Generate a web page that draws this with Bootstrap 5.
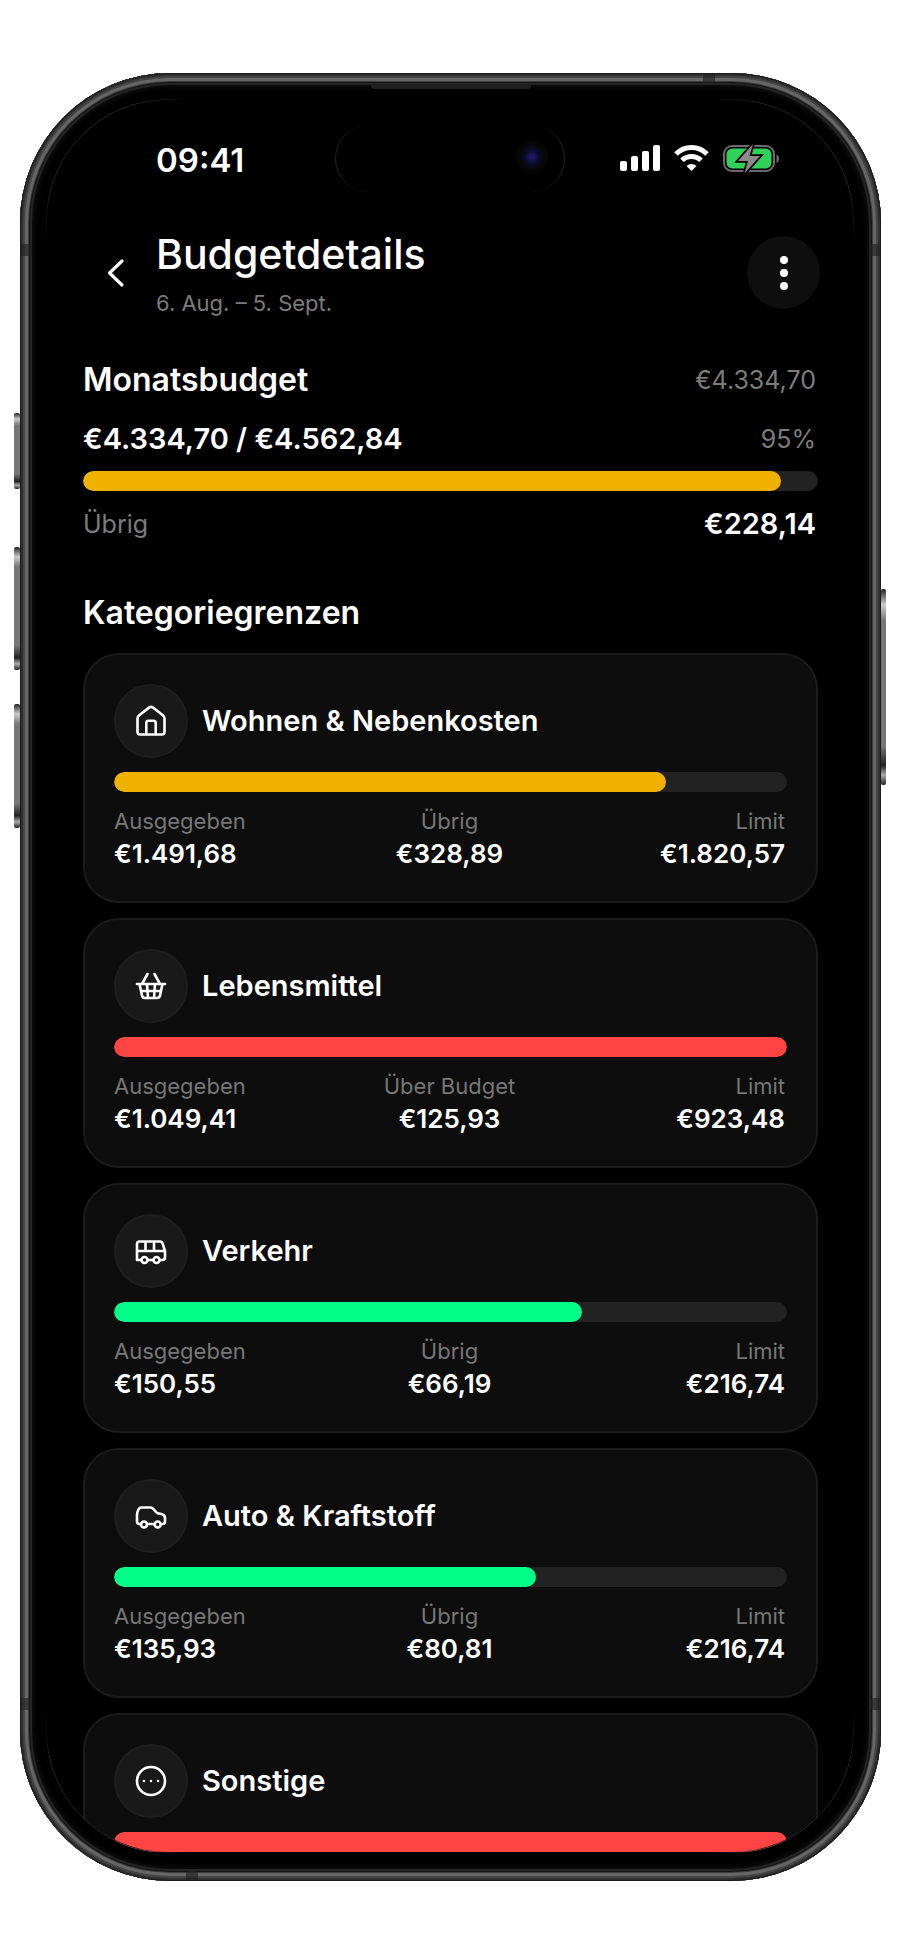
<!DOCTYPE html>
<html lang="de">
<head>
<meta charset="utf-8">
<meta name="viewport" content="width=device-width, initial-scale=1">
<title>Budgetdetails</title>
<link href="https://cdn.jsdelivr.net/npm/bootstrap@5.3.0/dist/css/bootstrap.min.css" rel="stylesheet">
<style>
  :root { --yellow: #f0b100; --red: #ff4444; --green: #00ff88; --muted: #7c7c7c; }
  body { background: #fff; color: #fff; font-family: Inter, "Liberation Sans", sans-serif; padding: 73px 19px 73px 20px; }
  .phone { max-width: 960px; padding: 26px 27px 28px 26px; border-radius: 150px; background: #000;
    box-shadow: inset 0 0 0 1px #1a1a1a, inset 0 0 0 3px #303030, inset 0 0 0 5px #454545, inset 0 0 0 8px #666,
      inset 0 0 0 9px #3c3c3c, inset 0 0 0 10px #151515, inset 0 0 0 12px #242424, inset 0 0 6px 13px #151515; }
  .side-key { position: absolute; width: 6px; border-radius: 2px; background: linear-gradient(#222, #ccc 8%, #777 16%, #777 80%, #222 90%, #aaa 95%, #222); }
  .key-left { left: -6px; }
  .key-right { right: -5px; width: 5px; }
  .key-action { top: 340px; height: 76px; }
  .key-up { top: 474px; height: 123px; }
  .key-down { top: 631px; height: 124px; }
  .key-power { top: 516px; height: 196px; }
  .earpiece { position: absolute; top: 11px; left: 50%; width: 160px; margin-left: -80px; height: 5px; background: #202020; border-radius: 0 0 4px 4px; }
  .antenna { position: absolute; width: 9px; height: 12px; background: rgba(34, 34, 34, .65); }
  .antenna-wide { width: 12px; height: 9px; }
  .antenna-top { top: 1px; right: 166px; }
  .antenna-bottom { bottom: 1px; left: 166px; }
  .antenna-left { left: 1px; }
  .antenna-right { right: 1px; }
  .antenna-high { top: 171px; }
  .antenna-low { bottom: 171px; }
  .screen { border-radius: 122px; background: #000; padding: 0 36px 1px 37px; overflow: hidden; }
  .screen-edge { position: absolute; inset: 26px 27px 28px 26px; border: 1px solid #262626; border-radius: 122px; pointer-events: none;
    -webkit-mask-image: linear-gradient(90deg, #000 90px, transparent 145px, transparent calc(100% - 145px), #000 calc(100% - 90px)), linear-gradient(#000 90px, transparent 145px, transparent calc(100% - 145px), #000 calc(100% - 90px));
    -webkit-mask-composite: source-in; mask-composite: intersect; }
  .status-bar { padding: 41px 36px 0 73px; height: 94px; }
  .status-time { font-size: 33px; line-height: 40px; font-weight: 600; }
  .island { position: absolute; top: 52px; left: 50%; width: 230px; height: 67px; margin-left: -116px; border-radius: 34px; background: #000; border-left: 1px solid #222; border-right: 1px solid #222; }
  .camera { width: 34px; height: 34px; margin: 15px 15px 0 0; background: radial-gradient(circle, #1c1a66 0 2px, #0e0c33 6px, #070707 12px, #040404 17px); }
  .title-bar { height: 128px; margin-right: -2px; }
  .round-btn { width: 73px; height: 73px; margin-top: 43px; }
  .back-btn { padding: 0 0 0 12px; }
  .menu-btn, .menu-btn:hover { background: #0e0e0e; border-radius: 50%; }
  .titles { padding-top: 36px; }
  .page-title { font-size: 41px; line-height: 50px; font-weight: 500; }
  .period { font-size: 22px; line-height: 28px; color: var(--muted); margin-top: 10px; }
  .heading { font-size: 32px; line-height: 40px; font-weight: 600; }
  .amount { font-size: 29px; line-height: 40px; font-weight: 600; }
  .side-amount { font-size: 25px; line-height: 40px; color: var(--muted); }
  .summary { padding: 39px 0 0; }
  .summary-row { padding-right: 2px; }
  .summary-row + .summary-row { margin-top: 19px; }
  .summary .meter { margin: 12px 0 13px; }
  .meter { height: 20px; background: #222; border-radius: 10px; }
  .meter .progress-bar { border-radius: 10px; }
  .bar-yellow { background: var(--yellow); }
  .bar-red { background: var(--red); }
  .bar-green { background: var(--green); }
  .limits-title { margin: 49px 0 20px; }
  .limit-list { gap: 15px; }
  .limit-card { background: #0d0d0d; border: 2px solid #1b1b1b; border-radius: 36px; padding: 29px; color: #fff; height: auto; }
  .limit-card.cut-off { border-bottom: 0; border-radius: 36px 36px 0 0; padding-bottom: 0; }
  .cat-icon { width: 74px; height: 74px; background: #191919; border: 2px solid #1e1e1e; border-radius: 50%; }
  .cat-icon svg { fill: none; stroke: #fff; stroke-width: 2.6; stroke-linecap: round; stroke-linejoin: round; }
  .cat-name { font-size: 29px; line-height: 40px; font-weight: 600; margin-left: 14px; }
  .limit-card .meter { margin-top: 14px; }
  .figures { margin-top: 14px; padding-right: 2px; }
  .fig-label { font-size: 22px; line-height: 30px; font-weight: 400; color: #777; }
  .fig-value { font-size: 26px; line-height: 36px; font-weight: 600; margin: 0; }
</style>
</head>
<body>
<main class="phone position-relative mx-auto">
  <span class="side-key key-left key-action"></span>
  <span class="side-key key-left key-up"></span>
  <span class="side-key key-left key-down"></span>
  <span class="side-key key-right key-power"></span>
  <span class="antenna antenna-wide antenna-top"></span>
  <span class="antenna antenna-wide antenna-bottom"></span>
  <span class="antenna antenna-left antenna-high"></span>
  <span class="antenna antenna-left antenna-low"></span>
  <span class="antenna antenna-right antenna-high"></span>
  <span class="antenna antenna-right antenna-low"></span>
  <span class="earpiece"></span>
  <div class="island d-flex justify-content-end"><span class="camera rounded-circle"></span></div>

  <div class="screen">
    <div class="status-bar d-flex justify-content-between align-items-start">
      <span class="status-time">09:41</span>
      <svg class="mt-1" width="162" height="32" viewBox="0 0 162 32" role="img" aria-label="Empfang, WLAN, Akku lädt">
        <g fill="#fff"><rect x="0" y="17" width="7" height="10" rx="2"/><rect x="11" y="12" width="7" height="15" rx="2"/><rect x="22" y="7" width="7" height="20" rx="2"/><rect x="33" y="1" width="7" height="26" rx="2"/></g>
        <g fill="none" stroke="#fff" stroke-width="5"><path d="M56 10a21.500 21.500 0 0 1 31 0"/><path d="M62 16.300a13.500 13.500 0 0 1 19 0"/></g>
        <path d="M71.500 27l-5-5a7.500 7.500 0 0 1 10 0z" fill="#fff"/>
        <rect x="104" y="2" width="50" height="25" rx="8" fill="none" stroke="#6b6b6b" stroke-width="2"/>
        <rect x="106.500" y="4.500" width="45" height="20" rx="6" fill="#30d158"/>
        <path d="M156.500 10.500v8.500c3.500-1.500 3.500-7 0-8.500z" fill="#6b6b6b"/>
        <path d="M133 0L118 17h10L124.500 29.500L140 12H129.500z" fill="#8a8a8a" stroke="#000" stroke-width="3.500" paint-order="stroke"/>
      </svg>
    </div>

    <header class="title-bar d-flex align-items-start">
      <button class="btn round-btn back-btn border-0 d-flex align-items-center" type="button" aria-label="Zurück">
        <svg width="34" height="34" viewBox="0 0 34 34" fill="none" stroke="#fff" stroke-width="3.200" stroke-linecap="round" stroke-linejoin="round"><path d="M27 5L14.500 17L27 29"/></svg>
      </button>
      <div class="titles flex-grow-1">
        <h1 class="page-title mb-0">Budgetdetails</h1>
        <p class="period mb-0">6. Aug. – 5. Sept.</p>
      </div>
      <button class="btn round-btn menu-btn border-0 p-0 d-flex align-items-center justify-content-center" type="button" aria-label="Menü">
        <svg width="10" height="36" viewBox="0 0 10 36" fill="#fff"><circle cx="5" cy="5" r="4"/><circle cx="5" cy="18" r="4"/><circle cx="5" cy="31" r="4"/></svg>
      </button>
    </header>

    <section class="summary">
      <div class="summary-row d-flex justify-content-between"><h2 class="heading mb-0">Monatsbudget</h2><span class="side-amount">€4.334,70</span></div>
      <div class="summary-row d-flex justify-content-between"><span class="amount">€4.334,70 / €4.562,84</span><span class="side-amount">95%</span></div>
      <div class="progress meter" role="progressbar" aria-label="Monatsbudget" aria-valuenow="95" aria-valuemin="0" aria-valuemax="100"><div class="progress-bar bar-yellow" style="width:95%"></div></div>
      <div class="summary-row d-flex justify-content-between"><span class="side-amount">Übrig</span><span class="amount">€228,14</span></div>
    </section>

    <h2 class="heading limits-title">Kategoriegrenzen</h2>
    <div class="limit-list d-flex flex-column">
      <article class="card limit-card">
        <div class="d-flex align-items-center">
          <span class="cat-icon d-flex align-items-center justify-content-center"><svg width="34" height="34" viewBox="0 0 34 34"><path d="M3.500 14.500Q3.500 12.500 5.200 11.200L15 3.600Q17 2 19 3.600L28.800 11.200Q30.500 12.500 30.500 14.500V28Q30.500 30.500 28 30.500H6Q3.500 30.500 3.500 28Z"/><path d="M12.300 30V19Q12.300 16.800 14.500 16.800H19.500Q21.700 16.800 21.700 19V30"/></svg></span>
          <h3 class="cat-name mb-0">Wohnen &amp; Nebenkosten</h3>
        </div>
        <div class="progress meter" role="progressbar" aria-label="Wohnen &amp; Nebenkosten" aria-valuenow="82" aria-valuemin="0" aria-valuemax="100"><div class="progress-bar bar-yellow" style="width:82%"></div></div>
        <dl class="figures d-flex mb-0">
          <div class="col"><dt class="fig-label">Ausgegeben</dt><dd class="fig-value">€1.491,68</dd></div>
          <div class="col text-center"><dt class="fig-label">Übrig</dt><dd class="fig-value">€328,89</dd></div>
          <div class="col text-end"><dt class="fig-label">Limit</dt><dd class="fig-value">€1.820,57</dd></div>
        </dl>
      </article>

      <article class="card limit-card">
        <div class="d-flex align-items-center">
          <span class="cat-icon d-flex align-items-center justify-content-center"><svg width="34" height="34" viewBox="0 0 34 34"><path d="M3 15H31M5.500 15L8 26.500Q8.500 29 11 29H23Q25.500 29 26 26.500L28.500 15M8 15L13.500 5M26 15L20.500 5M7 22H27M13 15L14 29M21 15L20 29"/></svg></span>
          <h3 class="cat-name mb-0">Lebensmittel</h3>
        </div>
        <div class="progress meter" role="progressbar" aria-label="Lebensmittel" aria-valuenow="100" aria-valuemin="0" aria-valuemax="100"><div class="progress-bar bar-red" style="width:100%"></div></div>
        <dl class="figures d-flex mb-0">
          <div class="col"><dt class="fig-label">Ausgegeben</dt><dd class="fig-value">€1.049,41</dd></div>
          <div class="col text-center"><dt class="fig-label">Über Budget</dt><dd class="fig-value">€125,93</dd></div>
          <div class="col text-end"><dt class="fig-label">Limit</dt><dd class="fig-value">€923,48</dd></div>
        </dl>
      </article>

      <article class="card limit-card">
        <div class="d-flex align-items-center">
          <span class="cat-icon d-flex align-items-center justify-content-center"><svg width="34" height="34" viewBox="0 0 34 34"><path d="M7 26H3V10Q3 7.500 5.500 7.500H26Q28 7.500 28.600 9.500L31 17V23Q31 26 28.500 26H26M14 26H19M3 17H31M11.500 8V17M20 8V17"/><circle cx="10.500" cy="26" r="3"/><circle cx="22.500" cy="26" r="3"/></svg></span>
          <h3 class="cat-name mb-0">Verkehr</h3>
        </div>
        <div class="progress meter" role="progressbar" aria-label="Verkehr" aria-valuenow="69" aria-valuemin="0" aria-valuemax="100"><div class="progress-bar bar-green" style="width:69.500%"></div></div>
        <dl class="figures d-flex mb-0">
          <div class="col"><dt class="fig-label">Ausgegeben</dt><dd class="fig-value">€150,55</dd></div>
          <div class="col text-center"><dt class="fig-label">Übrig</dt><dd class="fig-value">€66,19</dd></div>
          <div class="col text-end"><dt class="fig-label">Limit</dt><dd class="fig-value">€216,74</dd></div>
        </dl>
      </article>

      <article class="card limit-card">
        <div class="d-flex align-items-center">
          <span class="cat-icon d-flex align-items-center justify-content-center"><svg width="34" height="34" viewBox="0 0 34 34"><path d="M7 25H5.500Q3 25 3 22.500V16Q3 13.500 4 11.500L4.700 10.200Q5.500 8.500 7.500 8.500H16Q17.800 8.500 19 9.600L23 14L28 15.200Q31 16 31 19V22.500Q31 25 28.500 25H27M13 25H20.500"/><circle cx="10" cy="25.500" r="3"/><circle cx="23.700" cy="25.500" r="3"/></svg></span>
          <h3 class="cat-name mb-0">Auto &amp; Kraftstoff</h3>
        </div>
        <div class="progress meter" role="progressbar" aria-label="Auto &amp; Kraftstoff" aria-valuenow="63" aria-valuemin="0" aria-valuemax="100"><div class="progress-bar bar-green" style="width:62.700%"></div></div>
        <dl class="figures d-flex mb-0">
          <div class="col"><dt class="fig-label">Ausgegeben</dt><dd class="fig-value">€135,93</dd></div>
          <div class="col text-center"><dt class="fig-label">Übrig</dt><dd class="fig-value">€80,81</dd></div>
          <div class="col text-end"><dt class="fig-label">Limit</dt><dd class="fig-value">€216,74</dd></div>
        </dl>
      </article>

      <article class="card limit-card cut-off">
        <div class="d-flex align-items-center">
          <span class="cat-icon d-flex align-items-center justify-content-center"><svg width="34" height="34" viewBox="0 0 34 34"><circle cx="17" cy="17" r="14"/><path d="M10 17h.01M17 17h.01M24 17h.01"/></svg></span>
          <h3 class="cat-name mb-0">Sonstige</h3>
        </div>
        <div class="progress meter" role="progressbar" aria-label="Sonstige" aria-valuenow="100" aria-valuemin="0" aria-valuemax="100"><div class="progress-bar bar-red" style="width:100%"></div></div>
      </article>
    </div>
  </div>
  <span class="screen-edge"></span>
</main>
<script src="https://cdn.jsdelivr.net/npm/bootstrap@5.3.0/dist/js/bootstrap.bundle.min.js"></script>
</body>
</html>
